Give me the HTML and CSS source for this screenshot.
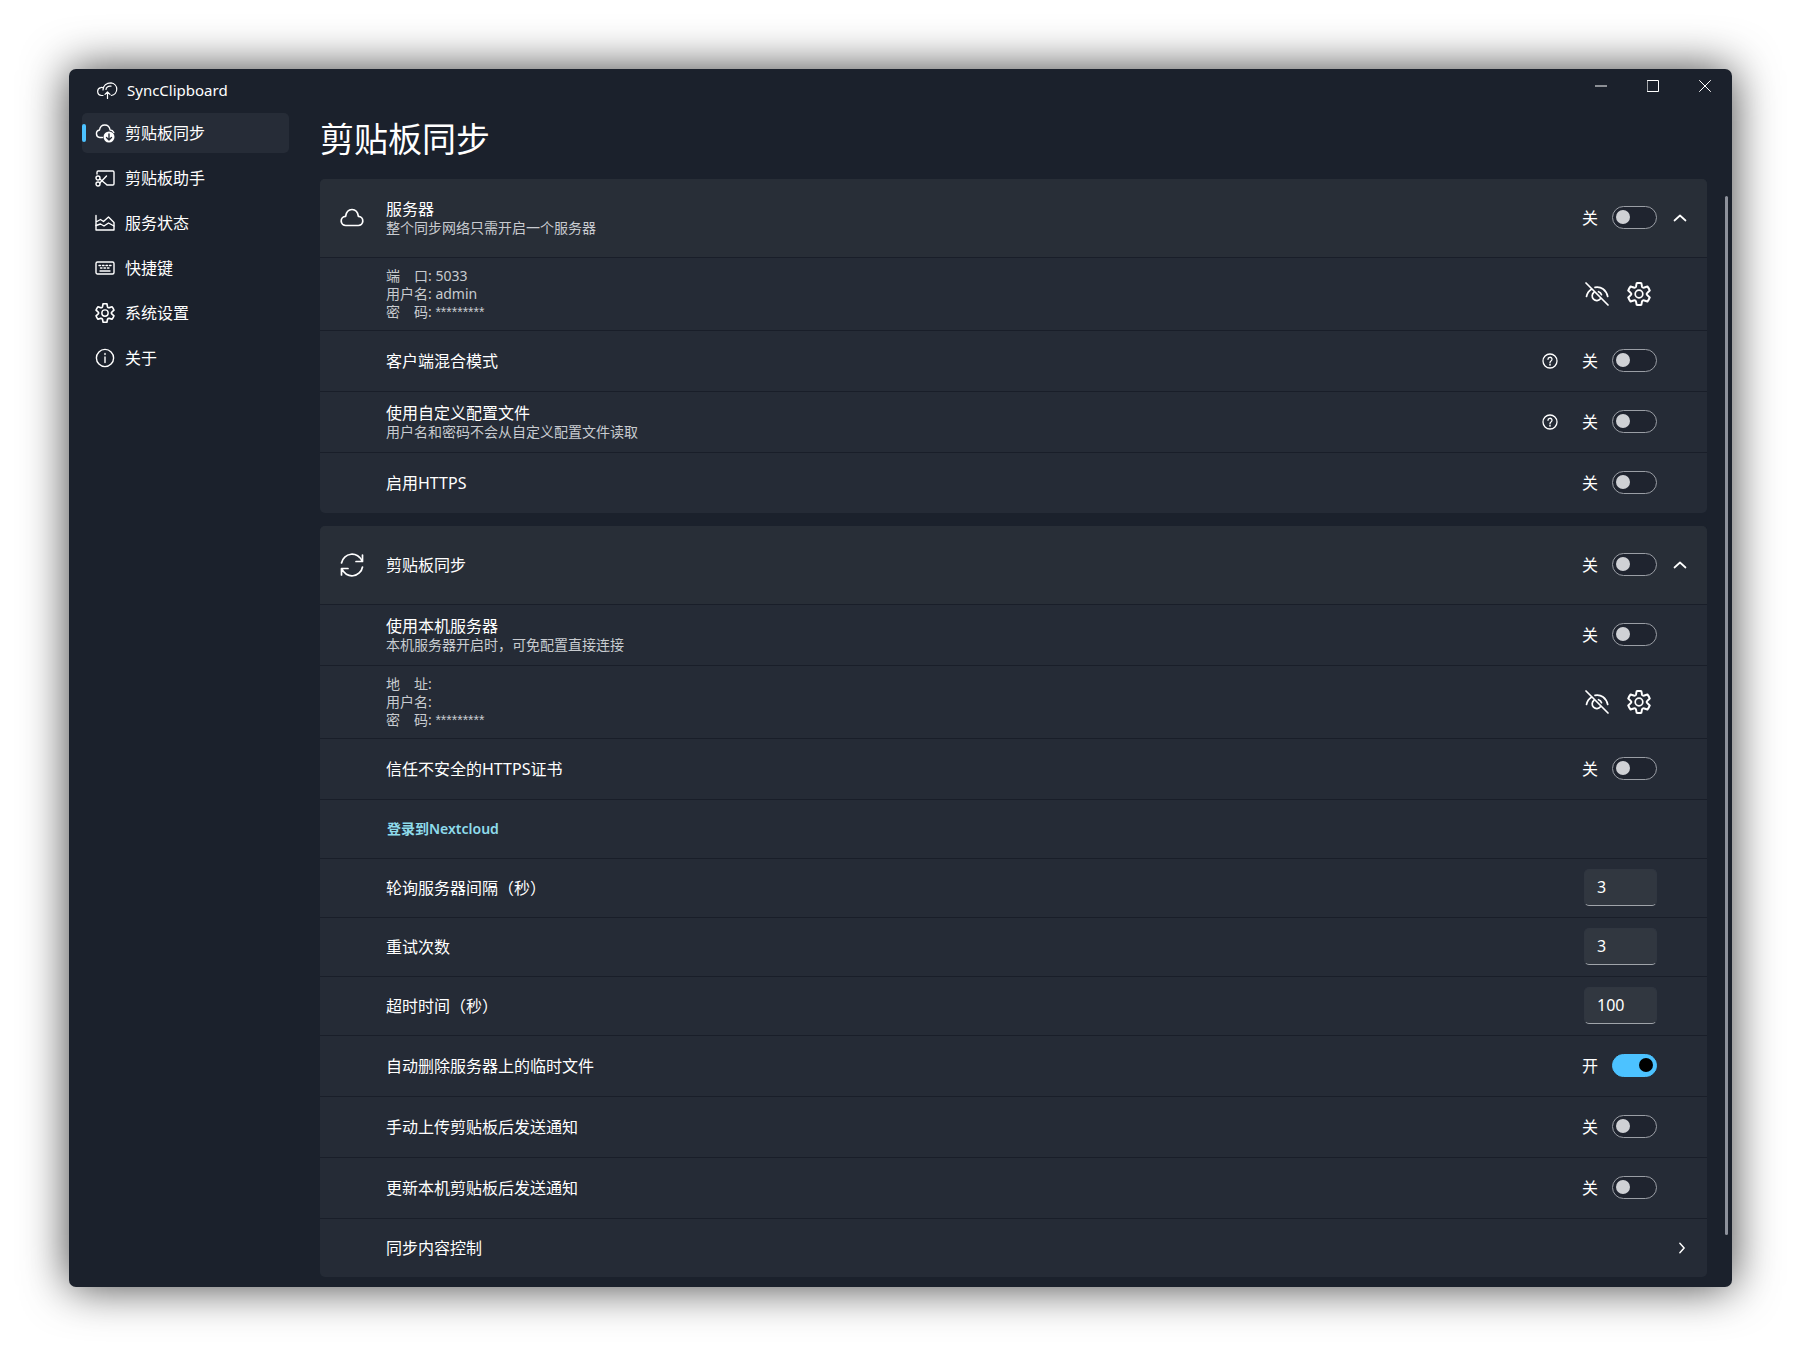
FILE: index.html
```
<!DOCTYPE html>
<html lang="zh-CN">
<head>
    <meta charset="UTF-8">
    <meta name="viewport" content="width=device-width, initial-scale=1.0">
    <title>SyncClipboard</title>
    <link rel="stylesheet" href="styles.css">
</head>
<body>
    <!-- 公用图标 -->
    <svg class="sprite" aria-hidden="true">
        <symbol id="gear" viewBox="0 0 24 24">
            <path d="M10 1.200a11 11 0 0 1 4 0l.5 2.600q.4 1.600 2 1.200l2.700-.9a11 11 0 0 1 2 3.500l-2 1.800q-1.300 1.100 0 2.200l2 1.800a11 11 0 0 1-2 3.500l-2.700-.9q-1.600-.4-2 1.200l-.5 2.600a11 11 0 0 1-4 0l-.5-2.600q-.4-1.600-2-1.200l-2.700.9a11 11 0 0 1-2-3.500l2-1.800q1.300-1.100 0-2.200l-2-1.800a11 11 0 0 1 2-3.500l2.700.9q1.600.4 2-1.200z" transform="translate(12 12) scale(1.17) translate(-12 -10.500)"/>
            <circle cx="12" cy="12" r="3.800"/>
        </symbol>
        <symbol id="eye-off" viewBox="0 0 24 24">
            <path d="M1.500 14.500c.6-3 2.500-5.600 5-7.200M10 5.300c6-1.200 11.300 2.700 12.700 9.200"/>
            <path d="M9 10.300a4.600 4.600 0 1 0 6.400 6.500M13.500 9.700a4.500 4.500 0 0 1 3 3"/>
            <path d="M1 1l22 22"/>
        </symbol>
        <symbol id="help" viewBox="0 0 16 16">
            <circle cx="8" cy="8" r="7"/>
            <path d="M6 6.300a2 2 0 1 1 3 1.700q-1 .7-1 1.700"/>
            <path d="M8 11.200v1"/>
        </symbol>
        <symbol id="chevron" viewBox="0 0 14 14">
            <path d="M1.500 9.500L7 4.500l5.500 5"/>
        </symbol>
    </svg>

    <div class="window">
        <aside class="sidebar">
            <div class="brand">
                <svg class="logo" viewBox="0 0 22 17">
                    <path d="M6 13.500H4.500A4 4 0 0 1 3.800 5.600Q5 5.300 6 5.700"/>
                    <path d="M6 8C6.200 3.500 9.500.8 14 .8a6.400 6.400 0 0 1 .3 12.700"/>
                    <path d="M9 7.500C9 5.500 11 3.700 14 4.200M10.500 16.500V10M8 12.300L10.500 9.800l2.500 2.500"/>
                </svg>
                <span>SyncClipboard</span>
            </div>
            <nav>
                <a href="#" class="nav-item active">
                    <svg viewBox="0 0 20 20">
                        <path d="M7.500 14.500H4.800A3.800 3.800 0 0 1 4.500 7C5 3.800 7 2 9.800 2s4.800 1.800 5.300 5c1.800.1 3 1 3.700 2.500"/>
                        <circle class="badge" cx="14" cy="14" r="5.500"/>
                        <path class="badge-arrow" d="M14 11v6M11.500 14.500L14 17l2.500-2.500"/>
                    </svg>
                    剪贴板同步
                </a>
                <a href="#" class="nav-item">
                    <svg viewBox="0 0 20 20">
                        <path d="M2 6V4.200Q2 3 3.200 3h14.600Q19 3 19 4.200v11.600q0 1.200-1.200 1.200H12"/>
                        <circle cx="3" cy="10" r="2"/>
                        <circle cx="3" cy="16" r="2"/>
                        <path d="M4.800 11l6.700 5.500M4.800 15l6.700-7"/>
                    </svg>
                    剪贴板助手
                </a>
                <a href="#" class="nav-item">
                    <svg viewBox="0 0 20 20">
                        <path d="M1 2.500V17h18V9.500L13.500 4 8.500 8.500 5.500 6.500 1 9"/>
                        <path d="M1 12.500l4.500-1.500 3.500 2 4.500-3L19 13"/>
                    </svg>
                    服务状态
                </a>
                <a href="#" class="nav-item">
                    <svg viewBox="0 0 20 20">
                        <rect x="1" y="4" width="18" height="12" rx="1.500"/>
                        <path d="M4 7.500h1.500M7.500 7.500H9M11 7.500h1.500M14.500 7.500H16M5.500 10h1.500M9 10h1.500M12.500 10H14M5 13h10"/>
                    </svg>
                    快捷键
                </a>
                <a href="#" class="nav-item">
                    <svg class="gear"><use href="#gear"/></svg>
                    系统设置
                </a>
                <a href="#" class="nav-item">
                    <svg viewBox="0 0 20 20">
                        <circle cx="10" cy="10" r="8.600"/>
                        <path d="M10 9v5.500M10 5.500v1"/>
                    </svg>
                    关于
                </a>
            </nav>
        </aside>

        <main class="content">
            <div class="window-buttons">
                <button type="button" aria-label="最小化"><svg viewBox="0 0 12 12"><path d="M0 6h12"/></svg></button>
                <button type="button" aria-label="最大化"><svg viewBox="0 0 12 12"><rect x=".5" y=".5" width="11" height="11"/></svg></button>
                <button type="button" aria-label="关闭"><svg viewBox="0 0 12 12"><path d="M.5.5l11 11M11.500.5l-11 11"/></svg></button>
            </div>
            <h1>剪贴板同步</h1>

            <section class="card">
                <div class="row row-header">
                    <svg class="row-icon" viewBox="0 0 24 24"><path d="M6 19.500h12a4.600 4.600 0 0 0 .4-9.200C17.800 6.200 15.400 3.500 12 3.500S6.200 6.200 5.600 10.300A4.600 4.600 0 0 0 6 19.500z"/></svg>
                    <div class="text">
                        <label for="server">服务器</label>
                        <small>整个同步网络只需开启一个服务器</small>
                    </div>
                    <span class="state">关</span>
                    <input type="checkbox" class="switch" id="server">
                    <button type="button" class="expand" aria-label="折叠"><svg><use href="#chevron"/></svg></button>
                </div>
                <div class="row row-info">
                    <div class="text info">
                        <span>端　口: 5033</span>
                        <span>用户名: admin</span>
                        <span>密　码: <span class="mask">*********</span></span>
                    </div>
                    <button type="button" class="icon-button" aria-label="显示密码"><svg><use href="#eye-off"/></svg></button>
                    <button type="button" class="icon-button" aria-label="设置"><svg><use href="#gear"/></svg></button>
                </div>
                <div class="row">
                    <div class="text"><label for="mixed">客户端混合模式</label></div>
                    <button type="button" class="help" aria-label="帮助"><svg><use href="#help"/></svg></button>
                    <span class="state">关</span>
                    <input type="checkbox" class="switch" id="mixed">
                </div>
                <div class="row">
                    <div class="text">
                        <label for="customConfig">使用自定义配置文件</label>
                        <small>用户名和密码不会从自定义配置文件读取</small>
                    </div>
                    <button type="button" class="help" aria-label="帮助"><svg><use href="#help"/></svg></button>
                    <span class="state">关</span>
                    <input type="checkbox" class="switch" id="customConfig">
                </div>
                <div class="row">
                    <div class="text"><label for="https">启用HTTPS</label></div>
                    <span class="state">关</span>
                    <input type="checkbox" class="switch" id="https">
                </div>
            </section>

            <section class="card">
                <div class="row row-header">
                    <svg class="row-icon" viewBox="0 0 24 24">
                        <path d="M1.500 10A10.700 10.700 0 0 1 22 8M22.500 2v6.500H16"/>
                        <path d="M22.500 14A10.700 10.700 0 0 1 2 16M1.500 22v-6.500H8"/>
                    </svg>
                    <div class="text"><label for="sync">剪贴板同步</label></div>
                    <span class="state">关</span>
                    <input type="checkbox" class="switch" id="sync">
                    <button type="button" class="expand" aria-label="折叠"><svg><use href="#chevron"/></svg></button>
                </div>
                <div class="row">
                    <div class="text">
                        <label for="localServer">使用本机服务器</label>
                        <small>本机服务器开启时，可免配置直接连接</small>
                    </div>
                    <span class="state">关</span>
                    <input type="checkbox" class="switch" id="localServer">
                </div>
                <div class="row row-info">
                    <div class="text info">
                        <span>地　址:</span>
                        <span>用户名:</span>
                        <span>密　码: <span class="mask">*********</span></span>
                    </div>
                    <button type="button" class="icon-button" aria-label="显示密码"><svg><use href="#eye-off"/></svg></button>
                    <button type="button" class="icon-button" aria-label="设置"><svg><use href="#gear"/></svg></button>
                </div>
                <div class="row">
                    <div class="text"><label for="trust">信任不安全的HTTPS证书</label></div>
                    <span class="state">关</span>
                    <input type="checkbox" class="switch" id="trust">
                </div>
                <div class="row row-small">
                    <a href="#" class="login">登录到Nextcloud</a>
                </div>
                <div class="row row-small">
                    <div class="text"><label for="interval">轮询服务器间隔（秒）</label></div>
                    <input type="text" inputmode="numeric" class="number" id="interval" value="3">
                </div>
                <div class="row row-small">
                    <div class="text"><label for="retry">重试次数</label></div>
                    <input type="text" inputmode="numeric" class="number" id="retry" value="3">
                </div>
                <div class="row row-small">
                    <div class="text"><label for="timeout">超时时间（秒）</label></div>
                    <input type="text" inputmode="numeric" class="number" id="timeout" value="100">
                </div>
                <div class="row">
                    <div class="text"><label for="autoDelete">自动删除服务器上的临时文件</label></div>
                    <span class="state">开</span>
                    <input type="checkbox" class="switch" id="autoDelete" checked>
                </div>
                <div class="row">
                    <div class="text"><label for="notifyUpload">手动上传剪贴板后发送通知</label></div>
                    <span class="state">关</span>
                    <input type="checkbox" class="switch" id="notifyUpload">
                </div>
                <div class="row">
                    <div class="text"><label for="notifyUpdate">更新本机剪贴板后发送通知</label></div>
                    <span class="state">关</span>
                    <input type="checkbox" class="switch" id="notifyUpdate">
                </div>
                <div class="row row-small row-link">
                    <div class="text">同步内容控制</div>
                    <button type="button" class="expand next" aria-label="同步内容控制"><svg><use href="#chevron"/></svg></button>
                </div>
            </section>
            <div class="scrollbar"></div>
        </main>
    </div>

    <script>
        // 切换开关时更新文字
        document.querySelectorAll(".switch").forEach(input => {
            input.addEventListener("change", () => {
                input.previousElementSibling.textContent = input.checked ? "开" : "关";
            });
        });
    </script>
</body>
</html>
```
FILE: styles.css
```
* {
    box-sizing: border-box;
}
body {
    margin: 0;
    padding: 69px 68px 68px 69px;
    background: #fff;
    color: #fff;
    font-family: "Noto Sans", "Noto Sans CJK SC", sans-serif;
    font-size: 16px;
    line-height: 20px;
}
svg {
    display: block;
    flex: none;
    fill: none;
    stroke: #fff;
    stroke-width: 1.7;
    stroke-linecap: round;
    stroke-linejoin: round;
}
button {
    padding: 0;
    border: none;
    background: none;
    color: inherit;
    cursor: pointer;
}
.sprite {
    position: absolute;
    width: 0;
    height: 0;
}
.window {
    display: flex;
    min-height: calc(100vh - 137px);
    background: #1b212c;
    border-radius: 7px;
    box-shadow: 0 0 46px rgba(0, 0, 0, 0.75);
}

/* 侧边栏 */
.sidebar {
    width: 251px;
    flex: none;
    padding: 11px 31px 0 13px;
}
.brand {
    display: flex;
    align-items: center;
    gap: 8px;
    height: 20px;
    margin-bottom: 13px;
    padding-left: 15px;
    font-size: 15px;
}
.logo {
    width: 22px;
    height: 17px;
    stroke-width: 1.2;
}
nav {
    display: flex;
    flex-direction: column;
    gap: 5px;
}
.nav-item {
    position: relative;
    display: flex;
    align-items: center;
    gap: 10px;
    height: 40px;
    padding-left: 13px;
    border-radius: 5px;
    color: #fff;
    text-decoration: none;
}
.nav-item svg {
    width: 20px;
    height: 20px;
    stroke-width: 1.4;
}
.nav-item .gear {
    stroke-width: 1.7;
}
.nav-item.active {
    background: #262c37;
}
.nav-item.active::before {
    content: "";
    position: absolute;
    left: 0;
    top: 11px;
    width: 4px;
    height: 18px;
    border-radius: 2px;
    background: #4cc2ff;
}
.badge {
    fill: #fff;
    stroke: none;
}
.badge-arrow {
    stroke: #262c37;
}

/* 内容 */
.content {
    position: relative;
    flex: 1;
    padding: 0 25px 10px 0;
}
.window-buttons {
    display: flex;
    justify-content: flex-end;
    height: 34px;
    margin-right: -24px;
}
.window-buttons button {
    display: flex;
    justify-content: center;
    align-items: center;
    width: 52px;
}
.window-buttons svg {
    width: 12px;
    height: 12px;
    stroke-width: 1;
}
h1 {
    margin: 6px 0 10px;
    font-size: 34px;
    font-weight: 400;
    line-height: 60px;
}
.card {
    border-radius: 5px;
    overflow: hidden;
    background: #252b36;
}
.card + .card {
    margin-top: 13px;
}
.row {
    display: flex;
    align-items: center;
    min-height: 61px;
    padding: 0 50px 0 66px;
    border-bottom: 1px solid #191e29;
}
.row:last-child {
    border-bottom: none;
    min-height: 60px;
}
.row-header {
    min-height: 79px;
    padding: 0 16px 0 20px;
    background: #282e37;
}
.row-info {
    min-height: 73px;
    padding-right: 56px;
}
.row-small {
    min-height: 59px;
}
.row-link,
.row-link:last-child {
    min-height: 58px;
    padding-right: 16px;
}
.row-icon {
    width: 24px;
    height: 24px;
    margin-right: 22px;
}
.text {
    flex: 1;
    display: flex;
    flex-direction: column;
}
.text small {
    color: #c8cbd0;
    font-size: 14px;
    line-height: 18px;
}
.info {
    color: #c8cbd0;
    font-size: 14px;
    line-height: 18px;
}
.mask {
    font-family: "Liberation Sans", sans-serif;
}
.state {
    margin-right: 14px;
}
.switch {
    appearance: none;
    display: flex;
    align-items: center;
    width: 45px;
    height: 23px;
    margin: 0 0 2px;
    padding: 0 3px;
    border: 1px solid #9a9ea5;
    border-radius: 12px;
    background: #1f242f;
    cursor: pointer;
}
.switch::before {
    content: "";
    width: 14px;
    height: 14px;
    border-radius: 50%;
    background: #cfd1d5;
}
.switch:checked {
    justify-content: flex-end;
    border-color: #4cc2ff;
    background: #4cc2ff;
}
.switch:checked::before {
    background: #000;
}
.expand {
    margin: 0 4px 0 16px;
}
.expand svg {
    width: 14px;
    height: 14px;
}
.next {
    margin-right: 3px;
}
.next svg {
    width: 12px;
    height: 12px;
    transform: rotate(90deg);
}
.icon-button + .icon-button {
    margin-left: 18px;
}
.icon-button svg {
    width: 24px;
    height: 24px;
}
.help {
    margin-right: 24px;
}
.help svg {
    width: 16px;
    height: 16px;
    stroke-width: 1.3;
}
.number {
    width: 73px;
    height: 37px;
    margin: 0 0 2px;
    padding: 0 12px;
    border: 1px solid #303640;
    border-bottom-color: #a0a4aa;
    border-radius: 5px;
    background: #313740;
    color: #fff;
    font: inherit;
}
.login {
    padding-left: 1px;
    color: #8fdcec;
    font-size: 14px;
    font-weight: 600;
    text-decoration: none;
}
.scrollbar {
    position: absolute;
    top: 127px;
    right: 4px;
    bottom: 52px;
    width: 3px;
    border-radius: 2px;
    background: #8d919b;
}
```
